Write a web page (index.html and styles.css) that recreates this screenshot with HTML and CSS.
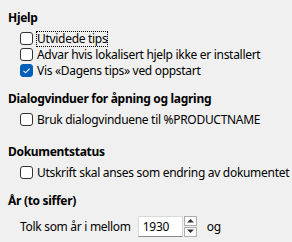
FILE: index.html
```html
<!DOCTYPE html>
<html lang="no">
<head>
  <meta charset="UTF-8">
  <title>Generelt</title>
  <link rel="stylesheet" href="styles.css">
</head>
<body>
  <div class="page">
    <section class="group">
      <div class="group-title">Hjelp</div>
      <label class="opt"><span class="box"></span><span class="label focus">Utvidede tips</span></label>
      <label class="opt"><span class="box"></span><span class="label">Advar hvis lokalisert hjelp ikke er installert</span></label>
      <label class="opt"><span class="box checked"><svg viewBox="0 0 13 13" width="13" height="13"><path d="M3.5 6.8 L5.6 8.8 L9.6 4.6" fill="none" stroke="#fff" stroke-width="1.1"/></svg></span><span class="label">Vis «Dagens tips» ved oppstart</span></label>
    </section>
    <section class="group">
      <div class="group-title">Dialogvinduer for åpning og lagring</div>
      <label class="opt"><span class="box"></span><span class="label">Bruk dialogvinduene til %PRODUCTNAME</span></label>
    </section>
    <section class="group status">
      <div class="group-title">Dokumentstatus</div>
      <label class="opt"><span class="box"></span><span class="label">Utskrift skal anses som endring av dokumentet</span></label>
    </section>
    <section class="group">
      <div class="group-title">År (to siffer)</div>
      <div class="year-row">
        <span class="label">Tolk som år i mellom</span>
        <div class="spin">
          <div class="spin-field">1930</div>
          <div class="spin-btns">
            <span class="spin-btn"><svg viewBox="0 0 9 5" width="9" height="5"><path d="M1 4.5 L4.5 1 L8 4.5 Z" fill="#333"/></svg></span>
            <span class="spin-btn"><svg viewBox="0 0 9 5" width="9" height="5"><path d="M1 0.5 L4.5 4 L8 0.5 Z" fill="#333"/></svg></span>
          </div>
        </div>
        <span class="label">og</span>
      </div>
    </section>
  </div>
</body>
</html>
```
FILE: styles.css
```css
* { box-sizing: border-box; }
body {
  margin: 0;
  background: #f0f0f0;
  color: #000;
  font-family: 'Noto Sans', 'Segoe UI', Arial, sans-serif;
  font-size: 12px;
  letter-spacing: -0.3px;
}
.page {
  padding: 10px 0 0 8px;
  display: flex;
  flex-direction: column;
  gap: 12px;
}
.group {
  display: flex;
  flex-direction: column;
}
.group.status { margin-top: 4px; }
.group-title {
  font-weight: bold;
  line-height: 16px;
  height: 16px;
  margin-bottom: 5px;
}
.opt {
  display: flex;
  align-items: flex-start;
  height: 16px;
  line-height: 16px;
  padding-left: 12px;
}
.box {
  width: 13px;
  height: 13px;
  margin-top: 1px;
  margin-right: 4px;
  border: 1px solid #333;
  border-radius: 3px;
  background: #fff;
  flex: none;
}
.box.checked {
  background: #005fb8;
  border-color: #005fb8;
  position: relative;
}
.box.checked svg {
  position: absolute;
  left: -1px;
  top: -1px;
}
.label { white-space: nowrap; }
.focus {
  outline: 1px dotted #000;
  outline-offset: -1px;
  padding: 0 1px;
  margin-left: -1px;
}
.year-row {
  display: flex;
  align-items: center;
  padding-left: 12px;
  height: 22px;
  margin-top: 1px;
}
.spin {
  display: flex;
  align-items: center;
  margin-left: 7px;
  margin-right: 10px;
}
.spin-field {
  width: 45px;
  height: 21px;
  line-height: 19px;
  padding-left: 4px;
  background: #fff;
  border: 1px solid #d9d9d9;
  border-bottom-color: #8a8a8a;
}
.spin-btns {
  display: flex;
  flex-direction: column;
  gap: 1px;
  margin-left: 1px;
}
.spin-btn {
  width: 13px;
  height: 10px;
  border: 1px solid #adadad;
  background: #fdfdfd;
  display: flex;
  align-items: center;
  justify-content: center;
}
.spin-btn svg { display: block; }
```
